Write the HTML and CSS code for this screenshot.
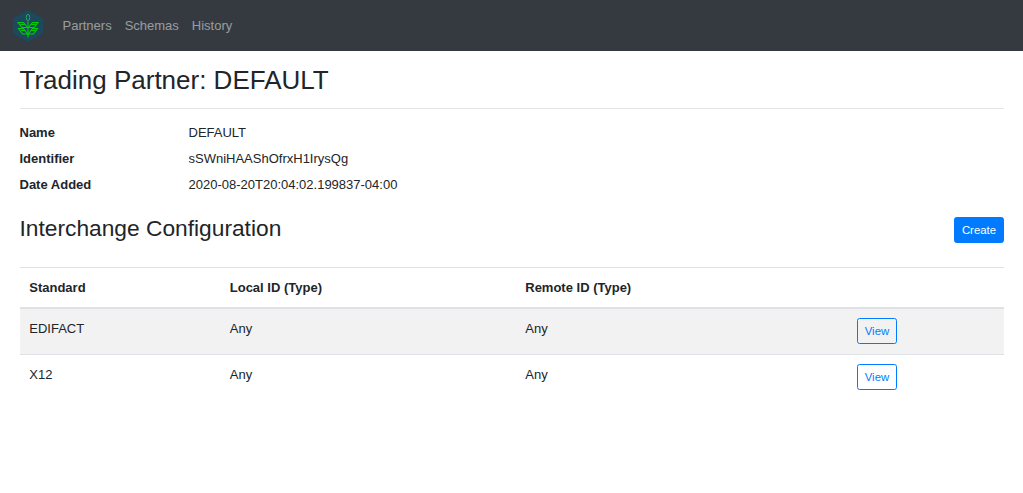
FILE: index.html
```html
<!DOCTYPE html>
<html lang="en">
<head>
<meta charset="utf-8">
<title>Trading Partner: DEFAULT</title>
<link rel="stylesheet" href="styles.css">
</head>
<body>
<nav class="navbar">
  <a class="brand" href="#">
    <svg class="logo" width="30" height="32" viewBox="0 0 30 32">
      <path d="M15 0.5 Q16 0.5 17 1 L28.5 7.5 Q30 8.5 30 10 V22 Q30 23.5 28.5 24.5 L17 31 Q15 32 13 31 L1.5 24.5 Q0 23.5 0 22 V10 Q0 8.5 1.5 7.5 L13 1 Q14 0.5 15 0.5 Z" fill="#1c4a5c"/>
      <g fill="none" stroke="#00d000" stroke-width="1.1">
        <ellipse cx="15" cy="7.5" rx="1.7" ry="3.2" stroke="#2f9f6f" stroke-width="1"/>
        <path d="M15 11.5 V27.5"/>
        <path d="M15 18 L10.5 12.5 H5 L9 17.5 H15"/>
        <path d="M15 18 L19.5 12.5 H25 L21 17.5 H15"/>
        <path d="M15 24.5 L10.5 18.5 H5.5 L9.5 24 H15"/>
        <path d="M15 24.5 L19.5 18.5 H24.5 L20.5 24 H15"/>
        <path d="M7.5 14.5 H12 M22.5 14.5 H18 M8 20.5 H12 M22 20.5 H18"/>
      </g>
    </svg>
  </a>
  <a class="nav-link" href="#">Partners</a>
  <a class="nav-link" href="#">Schemas</a>
  <a class="nav-link" href="#">History</a>
</nav>
<main class="content">
  <h1 class="page-title">Trading Partner: DEFAULT</h1>
  <hr class="rule">
  <dl class="details">
    <dt>Name</dt><dd>DEFAULT</dd>
    <dt>Identifier</dt><dd>sSWniHAAShOfrxH1IrysQg</dd>
    <dt>Date Added</dt><dd>2020-08-20T20:04:02.199837-04:00</dd>
  </dl>
  <div class="section-head">
    <h2 class="section-title">Interchange Configuration</h2>
    <a class="btn btn-primary" href="#">Create</a>
  </div>
  <table class="table">
    <thead>
      <tr><th class="col-a">Standard</th><th class="col-b">Local ID (Type)</th><th class="col-c">Remote ID (Type)</th><th></th></tr>
    </thead>
    <tbody>
      <tr class="striped"><td>EDIFACT</td><td>Any</td><td>Any</td><td><a class="btn btn-outline" href="#">View</a></td></tr>
      <tr><td>X12</td><td>Any</td><td>Any</td><td><a class="btn btn-outline" href="#">View</a></td></tr>
    </tbody>
  </table>
</main>
</body>
</html>
```
FILE: styles.css
```css
* { box-sizing: border-box; }
body {
  margin: 0;
  font-family: "Liberation Sans", Arial, sans-serif;
  font-size: 13px;
  line-height: 1.5;
  color: #212529;
  background: #fff;
}
a { text-decoration: none; }
.navbar {
  display: flex;
  align-items: center;
  height: 51px;
  padding: 0 13px;
  background: #343a40;
}
.brand { display: flex; margin-right: 13px; }
.logo { display: block; }
.nav-link {
  padding: 6.5px;
  color: rgba(255,255,255,.5);
}
.content { padding: 0 19px 0 19.5px; }
.page-title {
  margin: 13.5px 0 0;
  font-size: 26px;
  font-weight: 400;
  line-height: 1.2;
}
.rule {
  margin: 12px 0 0;
  border: 0;
  border-top: 1px solid rgba(0,0,0,.1);
}
.details {
  display: grid;
  grid-template-columns: 169px 1fr;
  grid-auto-rows: 26px;
  align-items: center;
  margin: 11.5px 0 0;
}
.details dt { font-weight: 700; }
.details dd { margin: 0; }
.section-head {
  display: flex;
  justify-content: space-between;
  align-items: flex-start;
  height: 69px;
}
.section-title {
  margin: 17px 0 0;
  font-size: 22.75px;
  font-weight: 400;
  line-height: 1.2;
}
.btn {
  display: inline-block;
  vertical-align: top;
  padding: 3.75px 7px 2.75px;
  font-size: 11.375px;
  line-height: 1.5;
  border: 1px solid transparent;
  border-radius: 2.6px;
}
.section-head .btn { margin-top: 19px; }
.table .btn { margin: -0.9px 0 0.9px; }
.btn-primary { color: #fff; background: #007bff; border-color: #007bff; }
.btn-outline { color: #007bff; border-color: #007bff; }
.table {
  width: 100%;
  border-collapse: collapse;
  table-layout: fixed;
}
.table th, .table td {
  padding: 9.75px;
  text-align: left;
  vertical-align: top;
  border-top: 1px solid #dee2e6;
}
.table thead th { border-bottom: 2px solid #dee2e6; font-weight: 700; }
.col-a { width: 200.5px; }
.col-b { width: 295.5px; }
.col-c { width: 331.5px; }
.striped { background: rgba(0,0,0,.05); }
```
